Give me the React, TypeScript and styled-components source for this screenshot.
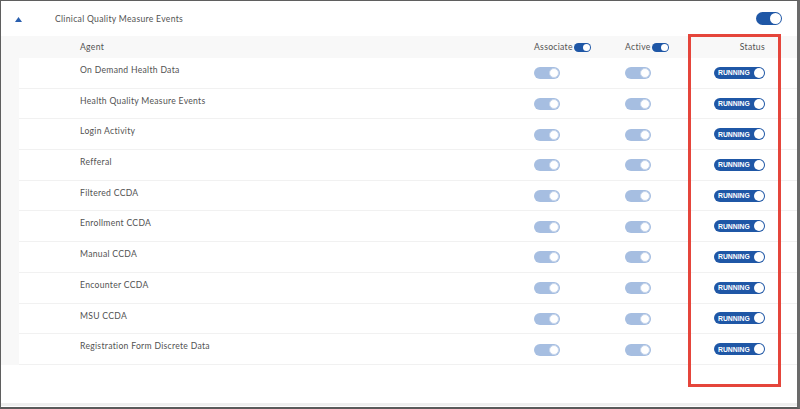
import styled, { createGlobalStyle } from "styled-components";

const GlobalStyle = createGlobalStyle`
  html, body {
    margin: 0;
    padding: 0;
    background: #ffffff;
  }
  * {
    box-sizing: border-box;
  }
`;

const agents = [
  "On Demand Health Data",
  "Health Quality Measure Events",
  "Login Activity",
  "Refferal",
  "Filtered CCDA",
  "Enrollment CCDA",
  "Manual CCDA",
  "Encounter CCDA",
  "MSU CCDA",
  "Registration Form Discrete Data",
];

const Frame = styled.div`
  position: relative;
  width: 800px;
  height: 409px;
  border-top: 1px solid #5f5f5f;
  border-left: 1px solid #5f5f5f;
  border-right: 3px solid #6a6a6a;
  border-bottom: 2px solid #5a5a5a;
  background: #ffffff;
  font-family: Lato, "Open Sans", sans-serif;
  color: #4d4d4d;
  display: flex;
  flex-direction: column;
  overflow: hidden;
`;

const TopBar = styled.div`
  height: 35px;
  display: flex;
  align-items: center;
  padding: 0 15px 0 14px;
`;

const Caret = styled.svg`
  width: 7px;
  height: 5px;
  margin-right: 33px;
  margin-top: 1px;
`;

const Title = styled.span`
  flex: 1;
  font-size: 8.6px;
  letter-spacing: 0.3px;
  color: #525252;
`;

const Table = styled.div`
  background: #f8f8f8;
`;

const cols = "grid-template-columns: 1fr 91px 89px 51px;";

const HeaderRow = styled.div`
  display: grid;
  ${cols}
  align-items: center;
  height: 22px;
  padding: 0 32px 0 79px;
  font-size: 8.6px;
  letter-spacing: 0.3px;
  color: #525252;
`;

const HeaderCell = styled.div<{ $right?: boolean }>`
  display: flex;
  align-items: center;
  gap: 1px;
  justify-content: ${(p) => (p.$right ? "flex-end" : "flex-start")};
  white-space: nowrap;
`;

const Body = styled.div`
  padding-left: 18px;
`;

const Row = styled.div`
  display: grid;
  ${cols}
  align-items: center;
  height: 30.7px;
  padding: 0 32px 0 61px;
  background: #ffffff;
  border-bottom: 1px solid #f1f1f1;
`;

const AgentName = styled.div`
  align-self: start;
  padding-top: 7px;
  font-size: 8.6px;
  letter-spacing: 0.3px;
  color: #525252;
`;

const Spacer = styled.div`
  flex: 1;
`;

const Strip = styled.div`
  height: 3px;
  background: #eeeeee;
  margin-bottom: 1px;
`;

const Track = styled.span<{ $w: number; $h: number; $light?: boolean }>`
  position: relative;
  display: inline-flex;
  align-items: center;
  justify-content: flex-start;
  width: ${(p) => p.$w}px;
  height: ${(p) => p.$h}px;
  border-radius: ${(p) => p.$h}px;
  background: ${(p) => (p.$light ? "#a6bee1" : "#1f57a6")};
  flex-shrink: 0;
`;

const Knob = styled.span<{ $d: number; $light?: boolean }>`
  position: absolute;
  right: 1px;
  top: 50%;
  width: ${(p) => p.$d}px;
  height: ${(p) => p.$d}px;
  margin-top: ${(p) => -p.$d / 2}px;
  border-radius: 50%;
  background: #ffffff;
  border: ${(p) => (p.$light ? "1px solid #c7d6ec" : "none")};
`;

const RunLabel = styled.span`
  font-family: "Liberation Sans", Arial, sans-serif;
  font-weight: 700;
  font-size: 6.8px;
  color: #ffffff;
  padding-left: 4px;
`;

const Annotation = styled.div`
  position: absolute;
  left: 687px;
  top: 33px;
  width: 93px;
  height: 353px;
  border: 3px solid #e5453b;
  pointer-events: none;
`;

function Toggle({ w, h, light }: { w: number; h: number; light?: boolean }) {
  return (
    <Track $w={w} $h={h} $light={light}>
      <Knob $d={h - 2} $light={light} />
    </Track>
  );
}

function Running() {
  return (
    <Track $w={51} $h={12}>
      <RunLabel>RUNNING</RunLabel>
      <Knob $d={10} />
    </Track>
  );
}

export default function App() {
  return (
    <>
      <GlobalStyle />
      <Frame>
        <TopBar>
          <Caret viewBox="0 0 7 5">
            <polygon points="3.5,0 7,5 0,5" fill="#2a5fae" />
          </Caret>
          <Title>Clinical Quality Measure Events</Title>
          <Toggle w={26} h={13} />
        </TopBar>
        <Table>
          <HeaderRow>
            <HeaderCell>Agent</HeaderCell>
            <HeaderCell>
              Associate<Toggle w={17} h={9} />
            </HeaderCell>
            <HeaderCell>
              Active<Toggle w={17} h={9} />
            </HeaderCell>
            <HeaderCell $right>Status</HeaderCell>
          </HeaderRow>
          <Body>
            {agents.map((name) => (
              <Row key={name}>
                <AgentName>{name}</AgentName>
                <div>
                  <Toggle w={26} h={12} light />
                </div>
                <div>
                  <Toggle w={26} h={12} light />
                </div>
                <Running />
              </Row>
            ))}
          </Body>
        </Table>
        <Spacer />
        <Strip />
        <Annotation />
      </Frame>
    </>
  );
}
